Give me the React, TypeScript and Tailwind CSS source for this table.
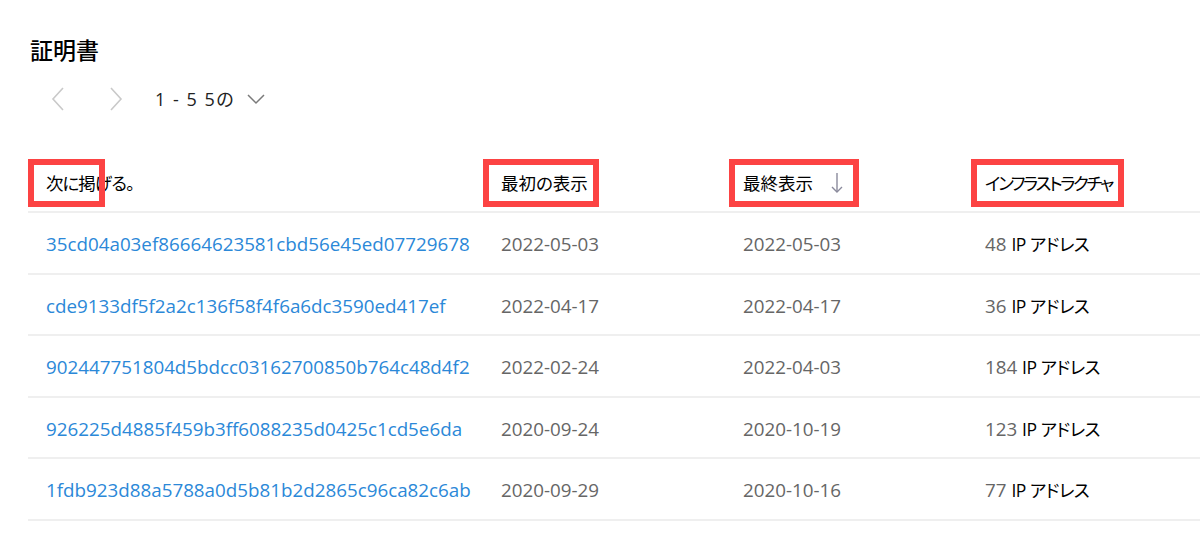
const rows = [
  { hash: '35cd04a03ef86664623581cbd56e45ed07729678', first: '2022-05-03', last: '2022-05-03', ips: '48' },
  { hash: 'cde9133df5f2a2c136f58f4f6a6dc3590ed417ef', first: '2022-04-17', last: '2022-04-17', ips: '36' },
  { hash: '902447751804d5bdcc03162700850b764c48d4f2', first: '2022-02-24', last: '2022-04-03', ips: '184' },
  { hash: '926225d4885f459b3ff6088235d0425c1cd5e6da', first: '2020-09-24', last: '2020-10-19', ips: '123' },
  { hash: '1fdb923d88a5788a0d5b81b2d2865c96ca82c6ab', first: '2020-09-29', last: '2020-10-16', ips: '77' },
]

const cols = 'grid grid-cols-[455px_242px_242px_1fr]'

function HeaderCell({
  label,
  box,
  tight,
  children,
}: {
  label: string
  box: string
  tight?: string
  children?: React.ReactNode
}) {
  return (
    <div className="relative flex items-center pl-[18px] h-full">
      <span className={`text-[17.5px] text-black whitespace-nowrap [font-feature-settings:'palt'] ${tight ?? ''}`}>{label}</span>
      {children}
      {/* annotation box */}
      <div className={`absolute top-[4px] h-[48px] border-[6px] border-[#fc4343] ${box}`} />
    </div>
  )
}

export default function App() {
  return (
    <div
      className="w-[1200px] h-[538px] bg-white overflow-hidden"
      style={{ fontFamily: '"Open Sans", "Noto Sans CJK JP", sans-serif' }}
    >
      {/* ── Title ── */}
      <h1 className="pt-[34px] pl-[30px] text-[23px] leading-[32px] font-medium text-black [font-feature-settings:'palt']">
        証明書
      </h1>

      {/* ── Pagination ── */}
      <div className="mt-[17px] h-[32px] flex items-center pl-[49px]">
        <svg width="18" height="24" viewBox="0 0 18 24" className="text-[#c9c9c9]">
          <polyline points="14,1 4,12 14,23" fill="none" stroke="currentColor" strokeWidth="1.6" />
        </svg>
        <svg width="18" height="24" viewBox="0 0 18 24" className="ml-[40px] text-[#c9c9c9]">
          <polyline points="4,1 14,12 4,23" fill="none" stroke="currentColor" strokeWidth="1.6" />
        </svg>
        <span className="ml-[30px] text-[18px] tracking-[1.5px] text-[#222] [font-feature-settings:'palt']">1 - 5 5の</span>
        <svg width="18" height="12" viewBox="0 0 18 12" className="ml-[12px] text-[#7a7a7a]">
          <polyline points="1,2 9,10 17,2" fill="none" stroke="currentColor" strokeWidth="1.5" />
        </svg>
      </div>

      {/* ── Table ── */}
      <div className="ml-[28px] mt-[40px]">
        <div className={`${cols} h-[58px] border-b-2 border-[#efefef]`}>
          <HeaderCell label="次に掲げる。" box="left-0 w-[77px]" tight="tracking-[-1px]" />
          <HeaderCell label="最初の表示" box="left-0 w-[116px]" />
          <HeaderCell label="最終表示" box="left-[4px] w-[130px]">
            <svg width="12" height="22" viewBox="0 0 12 22" className="ml-[18px] text-[#8a8a9c]">
              <line x1="6" y1="1" x2="6" y2="20" stroke="currentColor" strokeWidth="1.4" />
              <polyline points="1,15 6,20 11,15" fill="none" stroke="currentColor" strokeWidth="1.4" />
            </svg>
          </HeaderCell>
          <HeaderCell label="インフラストラクチャ" box="left-[4px] w-[153px]" tight="tracking-[-2.3px]" />
        </div>

        {rows.map((r) => (
          <div key={r.hash} className={`${cols} h-[61.5px] items-center border-b-2 border-[#efefef] text-[18.8px] pt-[3px]`}>
            <a href="#" className="pl-[18px] text-[#2b88d8] whitespace-nowrap">{r.hash}</a>
            <span className="pl-[18px] text-[#666]">{r.first}</span>
            <span className="pl-[18px] text-[#666]">{r.last}</span>
            <span className="pl-[18px] whitespace-nowrap">
              <span className="text-[#666]">{r.ips}</span>{' '}
              <span className="text-black [font-feature-settings:'palt'] text-[17.5px] tracking-[-0.5px]">IP アドレス</span>
            </span>
          </div>
        ))}
      </div>
    </div>
  )
}
